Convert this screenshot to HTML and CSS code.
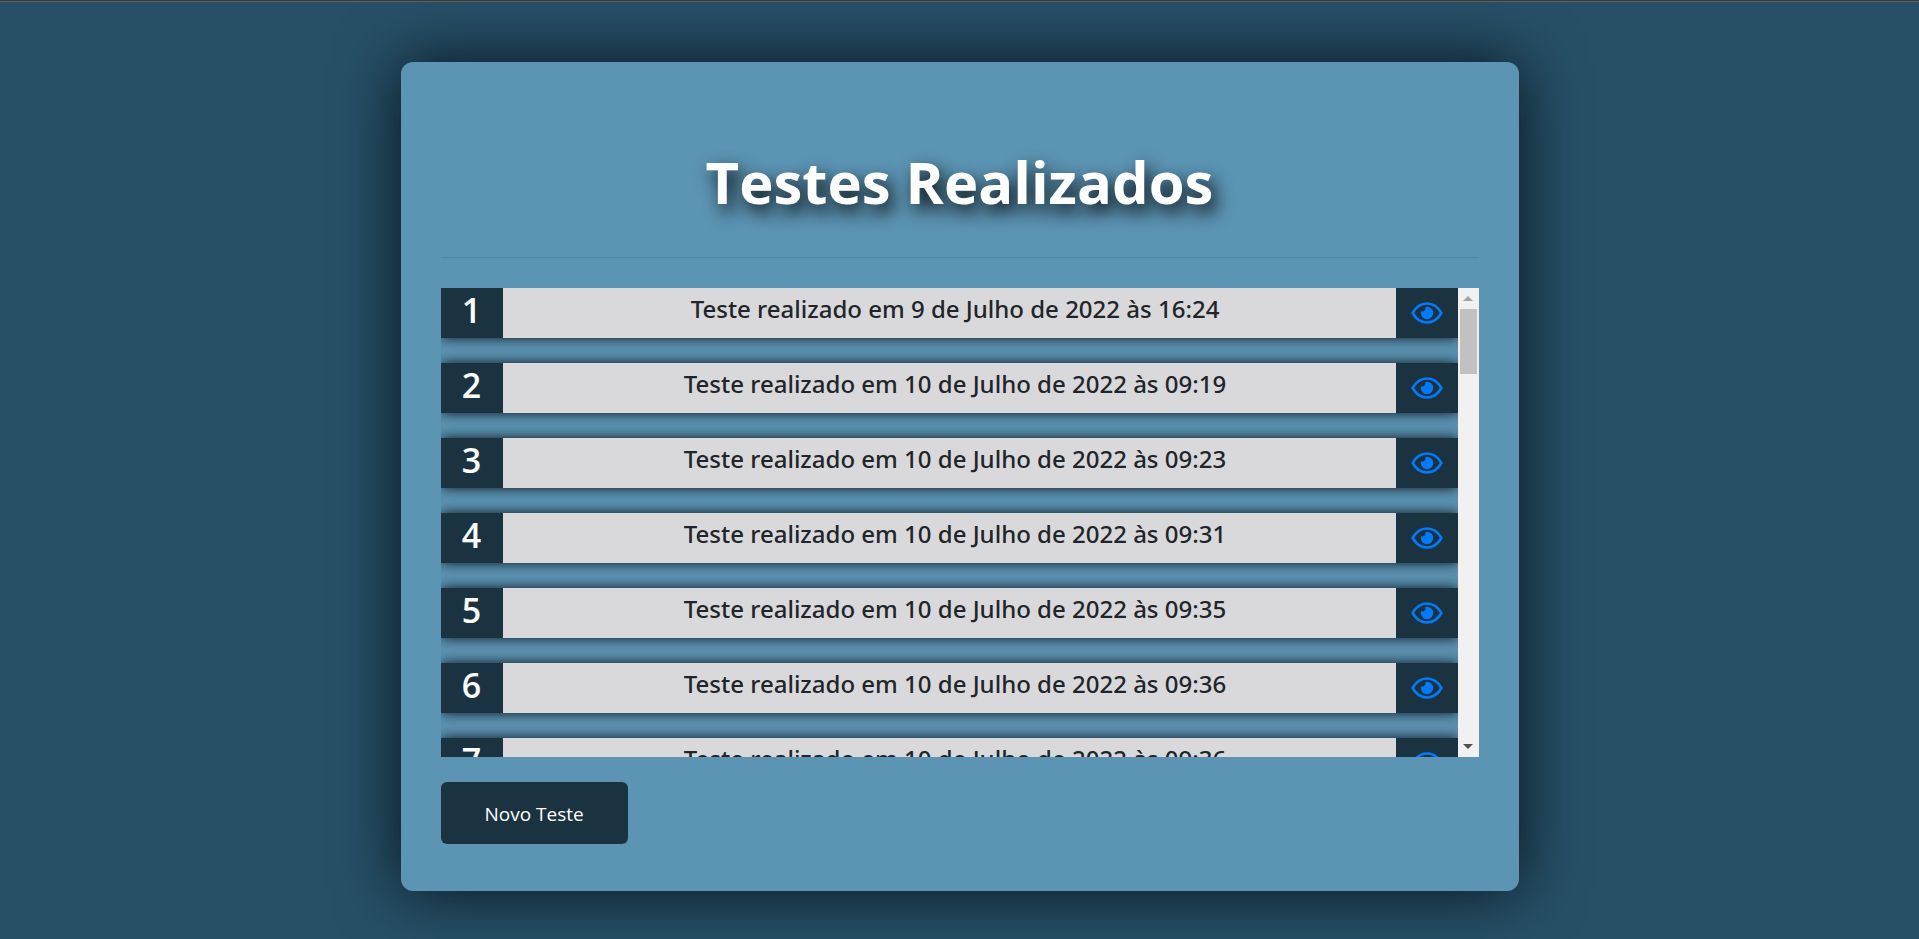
FILE: index.html
```html
<!DOCTYPE html>
<html lang="pt-BR">
<head>
<meta charset="utf-8">
<title>Testes Realizados</title>
<link rel="stylesheet" href="styles.css">
</head>
<body>
<svg class="sprite" aria-hidden="true">
  <symbol id="eye" viewBox="0 0 32 22">
    <path d="M1.600 11C5 5 10 1.500 16 1.500S27 5 30.400 11C27 17 22 20.500 16 20.500S5 17 1.600 11Z" fill="none" stroke="currentColor" stroke-width="2.600" stroke-linejoin="round"/>
    <path d="M16 4.800A6.200 6.200 0 1 1 9.800 11Q9.800 10 10.200 9.200A3.100 3.100 0 0 0 14.300 5.100Q15.100 4.800 16 4.800Z" fill="currentColor"/>
  </symbol>
</svg>
<main class="card">
  <h1 class="title">Testes Realizados</h1>
  <hr class="divider">
  <div class="panel">
    <ol class="tests">
      <li class="test"><span class="number">1</span><span class="label">Teste realizado em 9 de Julho de 2022 às 16:24</span><a class="view" href="#1" aria-label="Ver teste 1"><svg class="icon"><use href="#eye"/></svg></a></li>
      <li class="test"><span class="number">2</span><span class="label">Teste realizado em 10 de Julho de 2022 às 09:19</span><a class="view" href="#2" aria-label="Ver teste 2"><svg class="icon"><use href="#eye"/></svg></a></li>
      <li class="test"><span class="number">3</span><span class="label">Teste realizado em 10 de Julho de 2022 às 09:23</span><a class="view" href="#3" aria-label="Ver teste 3"><svg class="icon"><use href="#eye"/></svg></a></li>
      <li class="test"><span class="number">4</span><span class="label">Teste realizado em 10 de Julho de 2022 às 09:31</span><a class="view" href="#4" aria-label="Ver teste 4"><svg class="icon"><use href="#eye"/></svg></a></li>
      <li class="test"><span class="number">5</span><span class="label">Teste realizado em 10 de Julho de 2022 às 09:35</span><a class="view" href="#5" aria-label="Ver teste 5"><svg class="icon"><use href="#eye"/></svg></a></li>
      <li class="test"><span class="number">6</span><span class="label">Teste realizado em 10 de Julho de 2022 às 09:36</span><a class="view" href="#6" aria-label="Ver teste 6"><svg class="icon"><use href="#eye"/></svg></a></li>
      <li class="test"><span class="number">7</span><span class="label">Teste realizado em 10 de Julho de 2022 às 09:36</span><a class="view" href="#7" aria-label="Ver teste 7"><svg class="icon"><use href="#eye"/></svg></a></li>
    </ol>
    <div class="scrollbar" aria-hidden="true">
      <span class="arrow arrow-up"></span>
      <span class="track"><span class="thumb"></span></span>
      <span class="arrow arrow-down"></span>
    </div>
  </div>
  <button class="new-test" type="button">Novo Teste</button>
</main>
</body>
</html>
```
FILE: styles.css
```css
* { box-sizing: border-box; }
html { background: #275066; }
body {
  margin: 0;
  padding: 60px 20px 48px;
  min-height: 100vh;
  border-top: 1px solid #3a3a3c;
  box-shadow: inset 0 1px #5d6268;
  color: #212529;
  font-family: "Open Sans", "Noto Sans", sans-serif;
  overflow: hidden;
}
.sprite { display: none; }
.card {
  max-width: 1118px;
  margin: 1px auto 0;
  padding: 80px 40px 47px;
  border-radius: 12px;
  background: #5c94b3;
  box-shadow: 0 0 65px #07131e;
}
.title {
  margin: 0;
  color: #fff;
  font-size: 58px;
  font-weight: 700;
  line-height: 80px;
  text-align: center;
  text-shadow: 5px 8px 18px #000;
}
.divider {
  margin: 35px 0 30px;
  border: 0;
  border-top: 1px solid #5286a5;
}
.panel { display: flex; height: 469px; }
.tests {
  flex: 1;
  display: flex;
  flex-direction: column;
  gap: 25px;
  margin: 0;
  padding: 0;
  list-style: none;
  overflow: hidden;
}
.test {
  flex: none;
  display: flex;
  height: 50px;
  background: #d9d9db;
  box-shadow: 0 0 12px #0b1018;
}
.number, .view { flex: none; width: 62px; background: #1b3340; text-align: center; }
.number { color: #fff; font-size: 34px; font-weight: 600; line-height: 44px; }
.label {
  flex: 1;
  padding-left: 12px;
  font-family: "Noto Sans", "Open Sans", sans-serif;
  font-size: 24px;
  font-weight: 500;
  line-height: 42px;
  text-align: center;
}
.view { display: flex; justify-content: center; align-items: center; color: #007bff; }
.icon { width: 32px; height: 22px; }
.scrollbar { display: flex; flex-direction: column; width: 21px; background: #f1f1f1; }
.arrow { display: flex; justify-content: center; align-items: center; height: 21px; }
.arrow::before { content: ""; border: 5px solid transparent; border-width: 0 5px; }
.arrow-up::before { border-bottom: 5px solid #a3a3a3; }
.arrow-down::before { border-top: 5px solid #505050; }
.track { flex: 1; padding: 0 2px; }
.thumb { display: block; height: 65px; background: #c1c1c1; }
.new-test {
  display: block;
  margin-top: 25px;
  padding: 17px 44px 15px;
  border: 0;
  border-radius: 6px;
  background: #1b3340;
  color: #fff;
  font: 400 19px/30px "Open Sans", "Noto Sans", sans-serif;
}
```
